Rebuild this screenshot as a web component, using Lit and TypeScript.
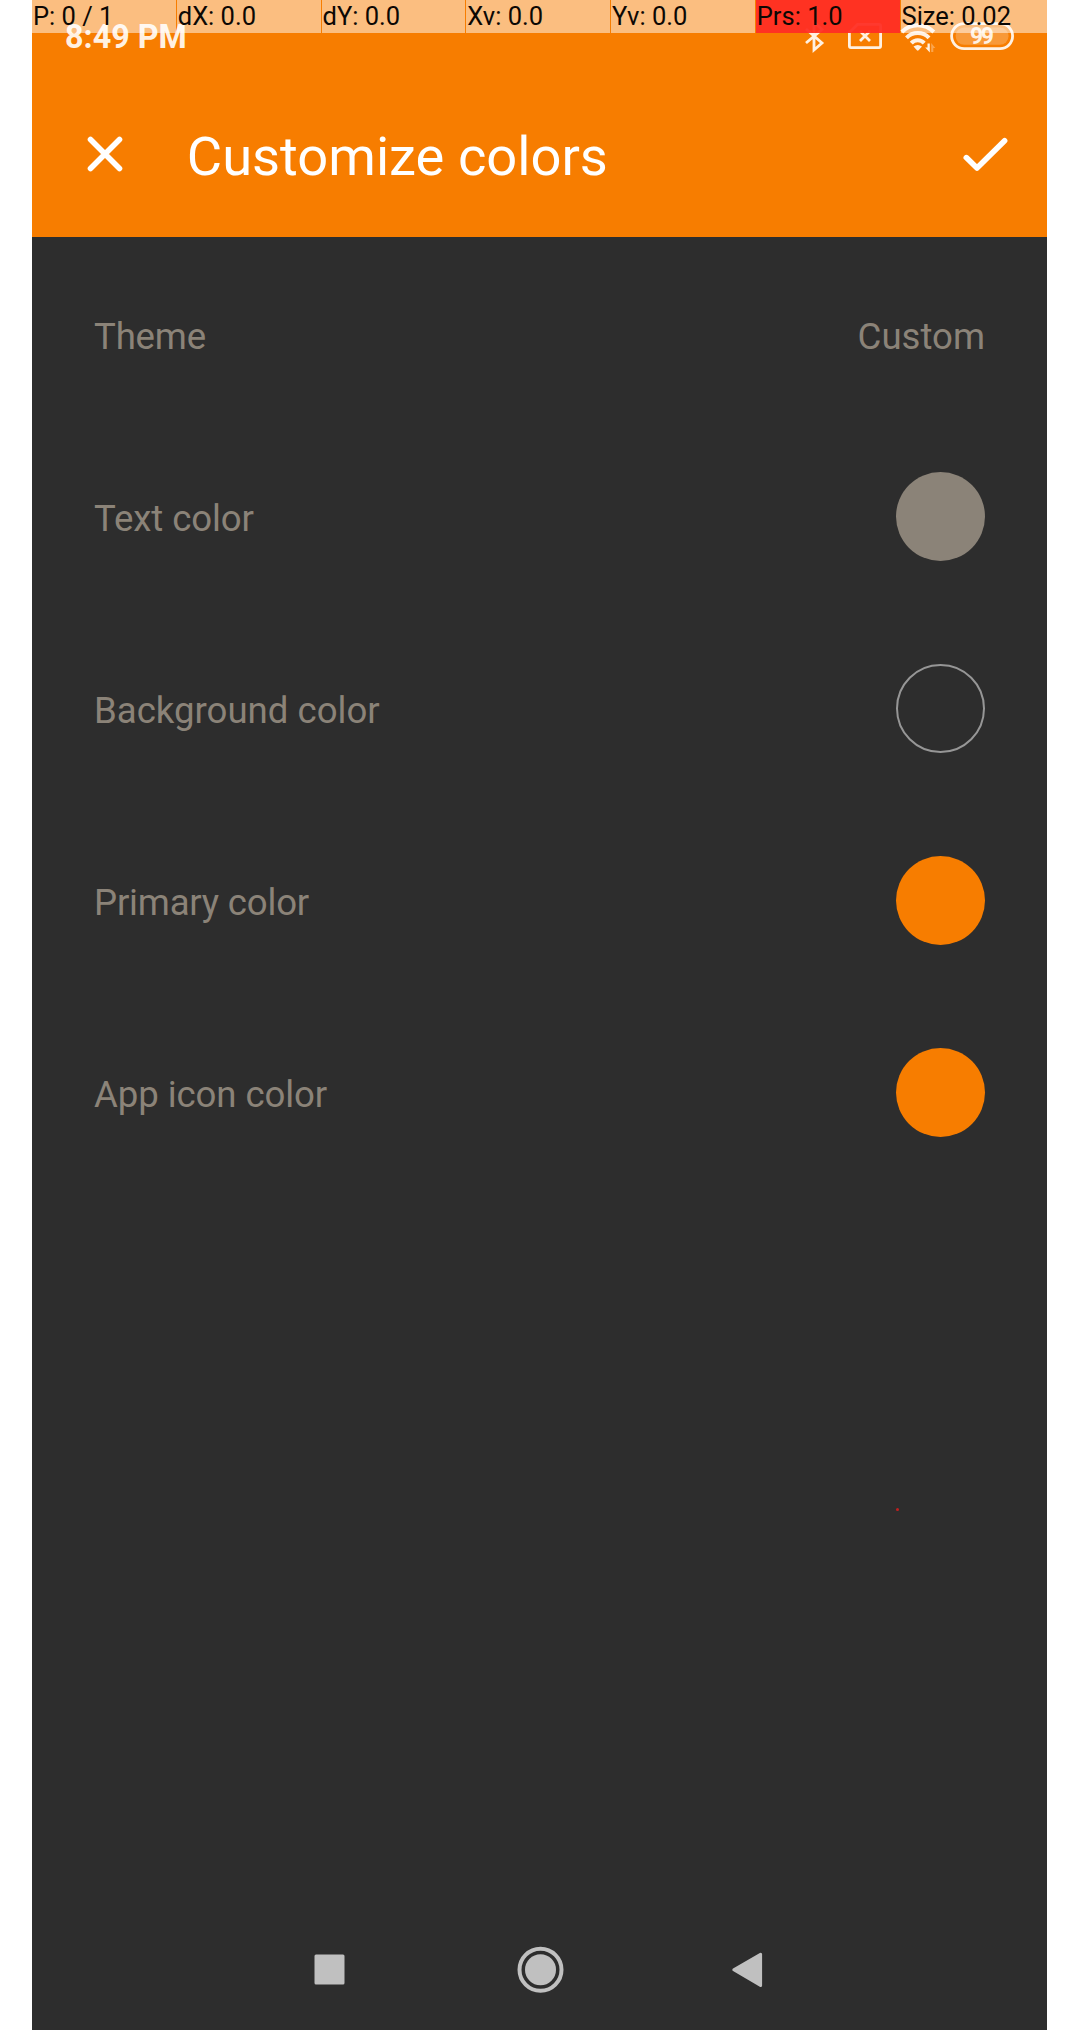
import { LitElement, html, css } from "lit";
import { customElement } from "lit/decorators.js";
import { classMap } from "lit/directives/class-map.js";

const READOUTS = ["P: 0 / 1", "dX: 0.0", "dY: 0.0", "Xv: 0.0", "Yv: 0.0", "Prs: 1.0", "Size: 0.02"];

const ROWS = [
  { label: "Text color", swatch: "text", fit: "snug" },
  { label: "Background color", swatch: "background", fit: "" },
  { label: "Primary color", swatch: "primary", fit: "tight" },
  { label: "App icon color", swatch: "primary", fit: "snug" },
];

@customElement("pointer-readout")
class PointerReadout extends LitElement {
  static styles = css`
    :host { display: grid; grid-template-columns: repeat(6, 144.750px) 1fr; height: 33px; }
    .cell {
      box-sizing: border-box;
      border-right: 1px solid transparent;
      background: rgba(255, 255, 255, 0.5);
      background-clip: padding-box;
      padding-left: 1px;
      font-size: 25.500px;
      line-height: 33px;
      color: #0c0804;
      white-space: nowrap;
    }
    .cell:last-child { border-right: 0; }
    .pressed { background: rgba(255, 46, 36, 0.95); background-clip: padding-box; }
  `;
  render() {
    return READOUTS.map(
      (t) => html`<div class=${classMap({ cell: true, pressed: t.startsWith("Prs") })}>${t}</div>`
    );
  }
}

@customElement("status-bar")
class StatusBar extends LitElement {
  static styles = css`
    :host { display: flex; height: 54px; padding: 20px 32px 0 33px; box-sizing: border-box; color: #fff1e2; }
    .time { flex: 1; font-size: 32.300px; font-weight: 700; line-height: 35px; }
    svg { display: block; flex: none; fill: none; stroke: currentColor; height: 34px; }
    .bt { width: 22px; margin-right: 21px; }
    .sim { width: 36px; margin-right: 17px; }
    .wifi { width: 36px; margin-right: 13px; }
    .battery { width: 66px; }
    .solid { fill: currentColor; stroke: none; }
    .level { fill: #fff; fill-opacity: 0.22; stroke: none; }
    .faint { opacity: 0.35; }
    .num { fill: currentColor; stroke: none; font: 700 23px Roboto, sans-serif; }
  `;
  render() {
    return html`
      <div class="time">8:49 PM</div>
      <svg class="bt" viewBox="0 0 22 34" stroke-width="2.8">
        <path d="M2 9 L18 23 L10 30 V2 L18 9.500 L2 23" />
      </svg>
      <svg class="sim" viewBox="0 0 36 34" stroke-width="2.8">
        <path d="M10.500 4.400 H32 Q33.600 4.400 33.600 6 V26 Q33.600 27.600 32 27.600 H4 Q2.400 27.600 2.400 26 V12.500 Z" />
        <path d="M13 11 L23 21 M23 11 L13 21" />
      </svg>
      <svg class="wifi" viewBox="0 0 36 34" stroke-width="4">
        <path d="M1.800 12 A22.500 22.500 0 0 1 33.800 12" />
        <path d="M6.500 17.800 A15.500 15.500 0 0 1 29 17.800" />
        <path d="M11.300 23.200 A8.700 8.700 0 0 1 24.200 23.200" />
        <path class="solid" d="M13.500 26.500 Q17.700 23.300 22 26.500 L18.600 30.300 Q17.700 31 16.900 30.300 Z" />
        <path class="solid" d="M27.500 23.500 H29.800 V32.500 L25.200 27.500 H27.500 Z" />
        <path class="solid faint" d="M31.200 32 V23 L35.300 28 H33.300 V32 Z" />
      </svg>
      <svg class="battery" viewBox="0 0 66 34" stroke-width="2.800">
        <rect x="2.600" y="3.600" width="61" height="25" rx="12.500" />
        <rect class="level" x="6.600" y="7.400" width="53" height="17.400" rx="8.700" />
        <text class="num" x="33" y="24.200" text-anchor="middle" textLength="24">99</text>
      </svg>
    `;
  }
}

@customElement("app-root")
class AppRoot extends LitElement {
  static styles = css`
    :host { display: block; width: 1088px; height: 2030px; background: #fff; overflow: hidden; }
    .phone {
      position: relative;
      display: flex;
      flex-direction: column;
      box-sizing: border-box;
      width: 1015px;
      height: 2030px;
      margin-left: 32px;
      background: #2d2d2d;
      color: #8b8378;
      font-family: Roboto, sans-serif;
    }
    .overlay { position: absolute; top: 0; left: 0; right: 0; }
    .touch { position: absolute; left: 864px; top: 1508px; width: 3px; height: 3px; border-radius: 50%; background: #c21f1f; }
    .header { background: #f77d00; height: 236.700px; flex: none; }
    .toolbar { display: flex; align-items: center; height: 200px; color: #fff; }
    .toolbar svg { display: block; fill: none; stroke: #fff; stroke-width: 5.600; stroke-linecap: round; stroke-linejoin: round; }
    .close { width: 40px; height: 40px; margin-left: 52.500px; }
    .title { flex: 1; margin: 6.500px 0 0 62.300px; font-size: 54.300px; font-weight: 400; line-height: 64px; }
    .check { width: 50px; height: 40px; margin-right: 36px; }
    .list { flex: 1; padding: 15.300px 62px 0; }
    .row { display: flex; align-items: center; justify-content: space-between; height: 191.800px; font-size: 36.600px; }
    .theme { height: 168.800px; }
    .label { padding-top: 4px; }
    .theme .label { padding-top: 0; }
    .snug { letter-spacing: -0.090px; }
    .tight { letter-spacing: -0.200px; }
    .swatch { box-sizing: border-box; width: 89px; height: 89px; border-radius: 50%; }
    .text { background: #8b8378; }
    .background { border: 2px solid #969696; }
    .primary { background: #f77d00; }
    .nav { display: flex; align-items: center; justify-content: center; gap: 172px; height: 121px; flex: none; }
    .nav svg { display: block; width: 48px; height: 48px; fill: #c0c0c0; overflow: visible; }
    .ring { fill: none; stroke: #c0c0c0; stroke-width: 4; }
    .back { stroke: #c0c0c0; stroke-width: 3; stroke-linejoin: round; }
  `;
  render() {
    return html`
      <div class="phone">
        <header class="header">
          <status-bar></status-bar>
          <div class="toolbar">
            <svg class="close" viewBox="0 0 40 40"><path d="M5.500 5.500 L34.500 34.500 M34.500 5.500 L5.500 34.500" /></svg>
            <h1 class="title">Customize colors</h1>
            <svg class="check" viewBox="0 0 50 40"><path d="M5.300 23.600 L16 34 L43.600 6.800" /></svg>
          </div>
        </header>
        <main class="list">
          <div class="row theme"><span class="label tight">Theme</span><span class="label">Custom</span></div>
          ${ROWS.map(
            (r) => html`<div class="row">
              <span class="label ${r.fit}">${r.label}</span><span class="swatch ${r.swatch}"></span>
            </div>`
          )}
        </main>
        <nav class="nav">
          <svg viewBox="0 0 48 48"><rect x="18.500" y="8.500" width="30" height="30" rx="1.500" /></svg>
          <svg viewBox="0 0 48 48"><circle class="ring" cx="24.500" cy="23.800" r="21" /><circle cx="24.500" cy="23.800" r="15.500" /></svg>
          <svg viewBox="0 0 48 48"><path class="back" d="M-2.200 23.800 L24.600 8.200 V39.500 Z" /></svg>
        </nav>
        <div class="touch"></div>
        <pointer-readout class="overlay"></pointer-readout>
      </div>
    `;
  }
}
